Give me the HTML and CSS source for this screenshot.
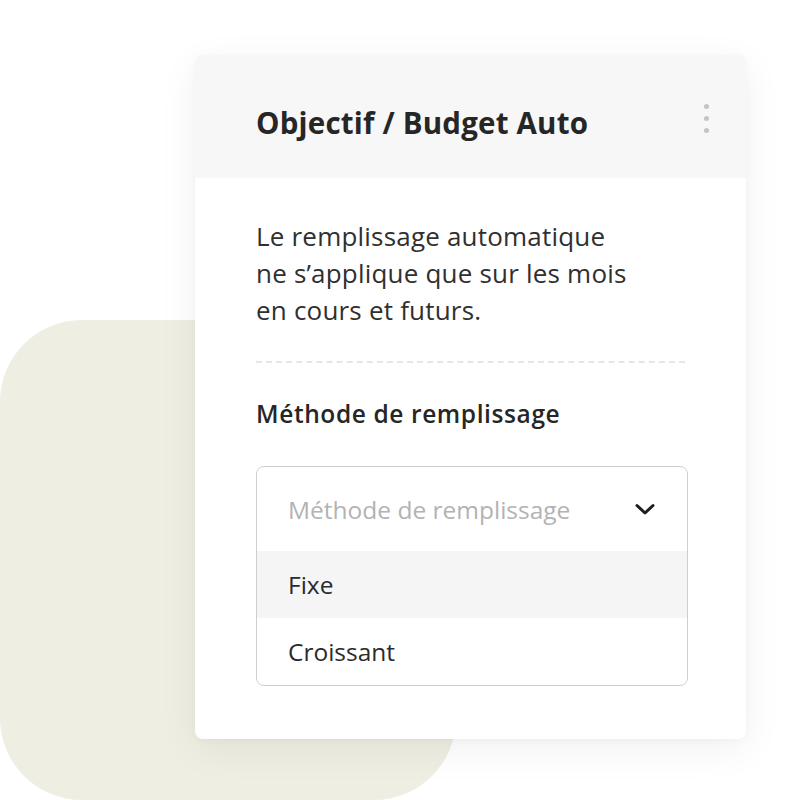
FILE: index.html
```html
<!DOCTYPE html>
<html lang="fr">

<head>
    <meta charset="UTF-8">
    <meta name="viewport" content="width=device-width, initial-scale=1.0">
    <title>Objectif / Budget Auto</title>
    <link rel="stylesheet" href="styles.css">
</head>

<body>
    <div class="scene">
        <!-- Decorative background shape -->
        <div class="blob"></div>

        <div class="card">
            <div class="card-header">
                <h2>Objectif / Budget Auto</h2>
                <div class="more-button">
                    <span></span><span></span><span></span>
                </div>
            </div>

            <div class="card-body">
                <p class="info">Le remplissage automatique<br>ne s’applique que sur les mois<br>en cours et futurs.</p>

                <div class="divider"></div>

                <h3 class="field-label">Méthode de remplissage</h3>

                <div class="select">
                    <div class="select-head">
                        <span class="placeholder">Méthode de remplissage</span>
                        <svg class="chevron" width="22" height="14" viewBox="0 0 22 14">
                            <path d="M3 3.5 L11 11 L19 3.5" fill="none" stroke="#1e1e1e" stroke-width="3" stroke-linecap="round" stroke-linejoin="round" />
                        </svg>
                    </div>
                    <div class="option active">Fixe</div>
                    <div class="option">Croissant</div>
                </div>
            </div>
        </div>
    </div>
</body>

</html>
```

FILE: styles.css
```css
/* Base Styles */
body {
    font-family: 'Open Sans', 'Inter', sans-serif;
    background-color: #fff;
    margin: 0;
    padding: 0;
    color: #2b2b2b;
}

.scene {
    position: relative;
    width: 800px;
    height: 800px;
    overflow: hidden;
    padding-top: 55px;
    box-sizing: border-box;
}

.blob {
    position: absolute;
    left: 0;
    top: 320px;
    width: 456px;
    height: 480px;
    background-color: #eeeee3;
    border-radius: 82px;
}

.card {
    position: relative;
    margin-left: 195px;
    width: 551px;
    background-color: white;
    border-radius: 8px;
    overflow: hidden;
    box-shadow: 0 10px 40px rgba(0, 0, 0, 0.06), 0 2px 8px rgba(0, 0, 0, 0.03);
}

.card-header {
    background-color: #f7f7f7;
    height: 123px;
    box-sizing: border-box;
    padding: 12px 37px 0 61px;
    display: flex;
    align-items: center;
    justify-content: space-between;
}

.card-header h2 {
    margin: 0;
    font-size: 29.5px;
    font-weight: 700;
    letter-spacing: 0.2px;
    color: #262626;
}

.more-button {
    display: flex;
    flex-direction: column;
    gap: 7px;
    margin-top: -9px;
}

.more-button span {
    width: 5px;
    height: 5px;
    border-radius: 50%;
    background-color: #c4c4c4;
}

.card-body {
    padding: 40px 58px 53px 61px;
}

.info {
    margin: 0;
    font-size: 26px;
    line-height: 37px;
    letter-spacing: 0.2px;
    color: #303030;
}

.divider {
    margin: 32px 3px 0 0;
    border-top: 2px dashed #e6e6e6;
}

.field-label {
    margin: 36px 0 0;
    font-size: 24.5px;
    font-weight: 600;
    line-height: 30px;
    letter-spacing: 0.6px;
    color: #262626;
}

.select {
    margin-top: 37px;
    border: 1px solid #cfcfcf;
    border-radius: 8px;
    overflow: hidden;
}

.select-head {
    height: 84px;
    padding: 0 31px 0 31px;
    display: flex;
    align-items: center;
    justify-content: space-between;
}

.placeholder {
    font-size: 24.5px;
    color: #b3b3b3;
}

.option {
    height: 67px;
    padding-left: 31px;
    display: flex;
    align-items: center;
    font-size: 24.5px;
    color: #2b2b2b;
}

.option.active {
    background-color: #f5f5f5;
}
```
